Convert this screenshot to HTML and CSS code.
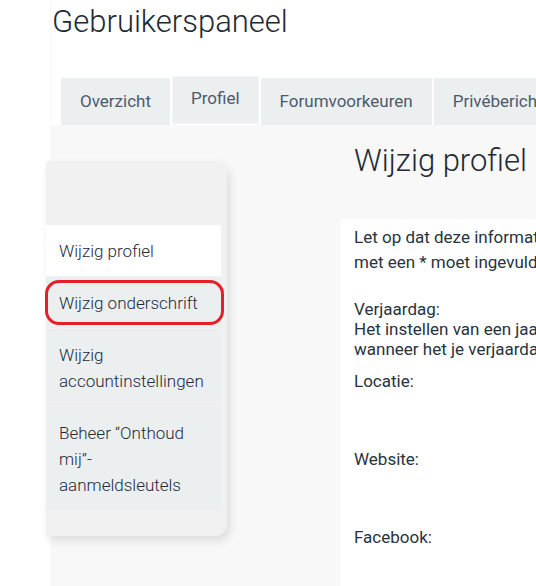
FILE: index.html
```html
<!DOCTYPE html>
<html lang="nl">
<head>
<meta charset="utf-8">
<title>Gebruikerspaneel</title>
<link rel="stylesheet" href="styles.css">
</head>
<body>
<div class="page">
  <header class="header">
    <h1 class="title">Gebruikerspaneel</h1>
    <nav class="tabs">
      <a class="tab">Overzicht</a>
      <a class="tab tab-active">Profiel</a>
      <a class="tab">Forumvoorkeuren</a>
      <a class="tab">Privéberichten</a>
    </nav>
  </header>
  <div class="body-row">
    <aside class="sidebar">
      <ul class="menu">
        <li class="menu-item menu-active">Wijzig profiel</li>
        <li class="menu-item menu-marked">Wijzig onderschrift<span class="marker"></span></li>
        <li class="menu-item">Wijzig accountinstellingen</li>
        <li class="menu-item">Beheer “Onthoud mij”-aanmeldsleutels</li>
      </ul>
    </aside>
    <main class="main">
      <h2 class="heading">Wijzig profiel</h2>
      <section class="panel">
        <p class="intro"><span class="line">Let op dat deze informatie openbaar zichtbaar zal zijn. Velden gemarkeerd</span><span class="line">met een * moet ingevuld worden.</span></p>
        <div class="field-block">
          <div class="line">Verjaardag:</div>
          <div class="line">Het instellen van een jaar zal je leeftijd weergeven</div>
          <div class="line">wanneer het je verjaardag is.</div>
        </div>
        <div class="field">Locatie:</div>
        <div class="field">Website:</div>
        <div class="field">Facebook:</div>
      </section>
    </main>
  </div>
</div>
</body>
</html>
```

FILE: styles.css
```css
html, body {
  margin: 0;
  padding: 0;
  overflow: hidden;
  background: #ffffff;
  height: 586px;
}
body {
  font-family: Roboto, "Liberation Sans", sans-serif;
  color: #283340;
}
.page {
  margin-left: 50px;
  background: #f8f8f8;
  min-height: 586px;
}
.header {
  margin-left: 1px;
  background: #ffffff;
  height: 125px;
  display: flex;
  flex-direction: column;
}
.title {
  margin: 0;
  padding: 2px 0 0 1px;
  font-weight: 300;
  font-size: 31px;
  line-height: 40px;
  color: #222a33;
  white-space: nowrap;
}
.tabs {
  margin-top: auto;
  display: flex;
  align-items: flex-end;
  gap: 2px;
  padding-left: 10px;
  white-space: nowrap;
}
.tab {
  display: block;
  flex: none;
  background: #eceff0;
  padding: 14px 19px;
  font-size: 17px;
  line-height: 19px;
  color: #4c5a6c;
}
.tab-active {
  padding: 12px 18px 15px;
  border: 1px solid #f4f5f6;
  margin-bottom: 1px;
}
.body-row {
  display: flex;
  align-items: flex-start;
}
.sidebar {
  flex: none;
  width: 175px;
  margin: 36px 0 0 -4px;
  padding: 64px 6px 26px 0;
  background: #f1f1f1;
  border-radius: 0 12px 12px 0;
  box-shadow: 3px 5px 10px rgba(0, 0, 0, 0.11);
}
.menu {
  list-style: none;
  margin: 0;
  padding: 0;
  display: flex;
  flex-direction: column;
  gap: 1px;
}
.menu-item {
  position: relative;
  background: #eceff0;
  padding: 13px 10px 12px 13px;
  font-size: 17px;
  font-weight: 300;
  line-height: 26px;
  color: #1f2a3c;
}
.menu-active {
  background: #ffffff;
}
.marker {
  position: absolute;
  left: -1px;
  top: 3px;
  width: 173px;
  height: 39px;
  border: 3px solid #e51f26;
  border-radius: 14px;
}
.main {
  flex: none;
  margin: 16px 0 0 114px;
  width: 600px;
}
.heading {
  margin: 0;
  padding-left: 13px;
  font-weight: 300;
  font-size: 31px;
  line-height: 40px;
  color: #222a33;
  white-space: nowrap;
}
.panel {
  margin-top: 38px;
  background: #ffffff;
  padding: 6px 13px 60px;
  min-height: 400px;
  font-size: 17px;
}
.line {
  display: block;
  white-space: nowrap;
}
.intro {
  margin: 0;
  line-height: 25px;
}
.field-block {
  margin-top: 24px;
  line-height: 20px;
}
.field {
  line-height: 25px;
  height: 78px;
}
.field-block + .field {
  margin-top: 10px;
}
```
